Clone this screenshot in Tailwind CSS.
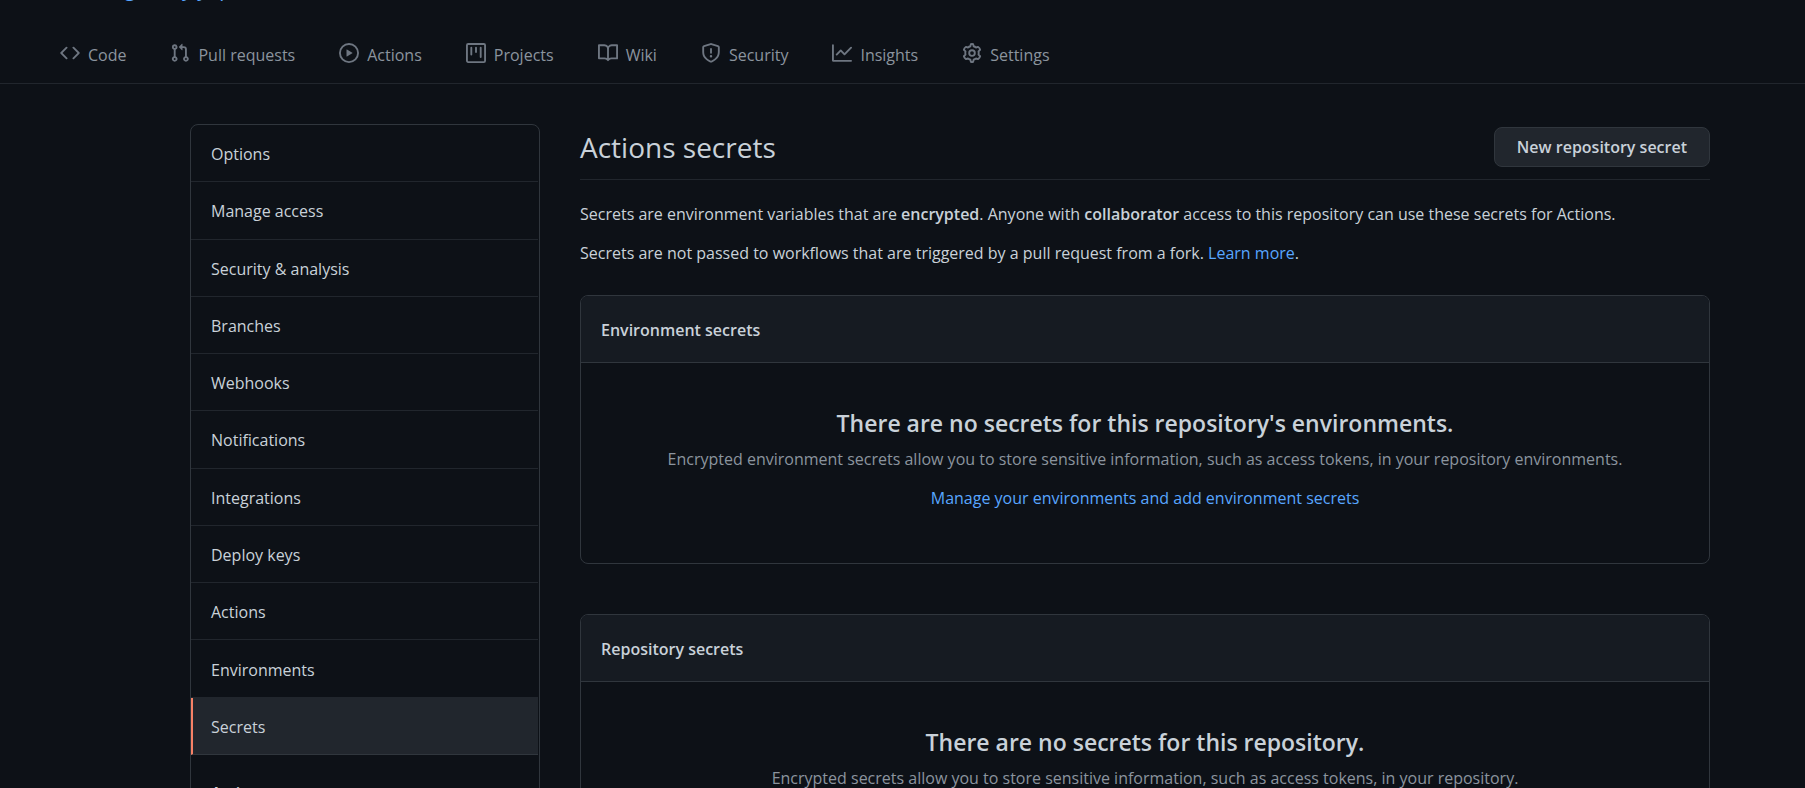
<!DOCTYPE html>
<html lang="en">
<head>
<meta charset="utf-8">
<meta name="viewport" content="width=device-width, initial-scale=1">
<title>Actions secrets</title>
<script src="https://cdn.jsdelivr.net/npm/@tailwindcss/browser@4"></script>
</head>
<body class="h-screen overflow-hidden bg-[#0d1117] font-['Open_Sans','Noto_Sans',sans-serif] text-base leading-[26px] text-[#c9d1d9]">
<header class="border-b border-[#21262d]">
  <div class="flex h-[5px] items-end overflow-hidden pb-0.5 pl-[101px]"><a href="#" class="text-xl leading-7 text-[#58a6ff]">angnabeyiyop</a></div>
  <nav class="flex h-[78px] items-center gap-11 pt-[23px] pb-px pl-[60px] text-[#8b949e]" aria-label="Repository">
    <a href="#" class="flex items-center gap-2"><svg class="mb-1 size-5 fill-[#6e7681]" viewBox="0 0 16 16" aria-hidden="true"><path fill-rule="evenodd" d="M4.72 3.22a.75.75 0 011.06 1.06L2.06 8l3.72 3.72a.75.75 0 11-1.06 1.06L.47 8.53a.75.75 0 010-1.06l4.25-4.25zm6.56 0a.75.75 0 10-1.06 1.06L13.94 8l-3.72 3.72a.75.75 0 101.06 1.06l4.25-4.25a.75.75 0 000-1.06l-4.25-4.25z"/></svg>Code</a>
    <a href="#" class="flex items-center gap-2"><svg class="mb-1 size-5 fill-[#6e7681]" viewBox="0 0 16 16" aria-hidden="true"><path fill-rule="evenodd" d="M7.177 3.073L9.573.677A.25.25 0 0110 .854v4.792a.25.25 0 01-.427.177L7.177 3.427a.25.25 0 010-.354zM3.75 2.5a.75.75 0 100 1.5.75.75 0 000-1.5zm-2.25.75a2.25 2.25 0 113 2.122v5.256a2.251 2.251 0 11-1.5 0V5.372A2.25 2.25 0 011.5 3.25zM11 2.5h-1V4h1a1 1 0 011 1v5.628a2.251 2.251 0 101.5 0V5A2.5 2.5 0 0011 2.5zm1 10.25a.75.75 0 111.5 0 .75.75 0 01-1.5 0zM3.75 12a.75.75 0 100 1.5.75.75 0 000-1.5z"/></svg>Pull requests</a>
    <a href="#" class="flex items-center gap-2"><svg class="mb-1 size-5 fill-[#6e7681]" viewBox="0 0 16 16" aria-hidden="true"><path fill-rule="evenodd" d="M1.5 8a6.5 6.5 0 1113 0 6.5 6.5 0 01-13 0zM8 0a8 8 0 100 16A8 8 0 008 0zM6.379 5.227A.25.25 0 006 5.442v5.117a.25.25 0 00.379.214l4.264-2.559a.25.25 0 000-.428L6.379 5.227z"/></svg>Actions</a>
    <a href="#" class="flex items-center gap-2"><svg class="mb-1 size-5 fill-[#6e7681]" viewBox="0 0 16 16" aria-hidden="true"><path fill-rule="evenodd" d="M1.75 0A1.75 1.75 0 000 1.75v12.5C0 15.216.784 16 1.75 16h12.5A1.75 1.75 0 0016 14.25V1.75A1.75 1.75 0 0014.25 0H1.75zM1.5 1.75a.25.25 0 01.25-.25h12.5a.25.25 0 01.25.25v12.5a.25.25 0 01-.25.25H1.75a.25.25 0 01-.25-.25V1.75zM11.75 3a.75.75 0 00-.75.75v7.5a.75.75 0 001.5 0v-7.5a.75.75 0 00-.75-.75zm-8.25.75a.75.75 0 011.5 0v5.5a.75.75 0 01-1.5 0v-5.5zM8 3a.75.75 0 00-.75.75v3.5a.75.75 0 001.5 0v-3.5A.75.75 0 008 3z"/></svg>Projects</a>
    <a href="#" class="flex items-center gap-2"><svg class="mb-1 size-5 fill-[#6e7681]" viewBox="0 0 16 16" aria-hidden="true"><path fill-rule="evenodd" d="M0 1.75A.75.75 0 01.75 1h4.253c1.227 0 2.317.59 3 1.501A3.744 3.744 0 0111.006 1h4.245a.75.75 0 01.75.75v10.5a.75.75 0 01-.75.75h-4.507a2.25 2.25 0 00-1.591.659l-.622.621a.75.75 0 01-1.06 0l-.622-.621A2.25 2.25 0 005.258 13H.75a.75.75 0 01-.75-.75V1.75zm8.755 3a2.25 2.25 0 012.25-2.25H14.5v9h-3.757c-.71 0-1.4.201-1.992.572l.004-7.322zm-1.504 7.324l.004-5.073-.002-2.253A2.25 2.25 0 005.003 2.5H1.5v9h3.757a3.75 3.75 0 011.994.574z"/></svg>Wiki</a>
    <a href="#" class="flex items-center gap-2"><svg class="mb-1 size-5 fill-[#6e7681]" viewBox="0 0 16 16" aria-hidden="true"><path fill-rule="evenodd" d="M7.467.133a1.75 1.75 0 011.066 0l5.25 1.68A1.75 1.75 0 0115 3.48V7c0 1.566-.32 3.182-1.303 4.682-.983 1.498-2.585 2.813-5.032 3.855a1.7 1.7 0 01-1.33 0c-2.447-1.042-4.049-2.357-5.032-3.855C1.32 10.182 1 8.566 1 7V3.48a1.75 1.75 0 011.217-1.667l5.25-1.68zm.61 1.429a.25.25 0 00-.153 0l-5.25 1.68a.25.25 0 00-.174.238V7c0 1.358.275 2.666 1.057 3.86.784 1.194 2.121 2.34 4.366 3.297a.2.2 0 00.154 0c2.245-.956 3.582-2.104 4.366-3.298C13.225 9.666 13.5 8.36 13.5 7V3.48a.25.25 0 00-.174-.237l-5.25-1.68zM9 10.5a1 1 0 11-2 0 1 1 0 012 0zm-.25-5.75a.75.75 0 10-1.5 0v3a.75.75 0 001.5 0v-3z"/></svg>Security</a>
    <a href="#" class="flex items-center gap-2"><svg class="mb-1 size-5 fill-[#6e7681]" viewBox="0 0 16 16" aria-hidden="true"><path fill-rule="evenodd" d="M1.5 1.75a.75.75 0 00-1.5 0v12.5c0 .414.336.75.75.75h14.5a.75.75 0 000-1.5H1.5V1.75zm14.28 2.53a.75.75 0 00-1.06-1.06L10 7.94 7.53 5.47a.75.75 0 00-1.06 0L3.22 8.72a.75.75 0 001.06 1.06L7 7.06l2.47 2.47a.75.75 0 001.06 0l5.25-5.25z"/></svg>Insights</a>
    <a href="#" class="flex items-center gap-2"><svg class="mb-1 size-5 fill-none stroke-[#6e7681] stroke-[1.5]" viewBox="0 0 16 16" aria-hidden="true"><circle cx="8" cy="8" r="2.25"/><path stroke-linejoin="round" d="M7.1.9Q8 .6 8.9.9L9.3 2.6Q10.4 3 11.2 3.6L12.9 3.1Q14.2 4.1 14.5 5.4L13.2 6.7Q13.5 8 13.2 9.3L14.5 10.6Q14.2 11.9 12.9 12.9L11.2 12.4Q10.4 13 9.3 13.4L8.9 15.1Q8 15.4 7.1 15.1L6.7 13.4Q5.6 13 4.8 12.4L3.1 12.9Q1.8 11.9 1.5 10.6L2.8 9.3Q2.5 8 2.8 6.7L1.5 5.4Q1.8 4.1 3.1 3.1L4.8 3.6Q5.6 3 6.7 2.6Z"/></svg>Settings</a>
  </nav>
</header>

<div class="flex items-start gap-10 pt-10 pr-[95px] pl-[190px]">
  <aside class="w-[350px] shrink-0 rounded-lg border border-[#30363d] pr-px">
    <nav class="grid min-h-[630px] auto-rows-fr" aria-label="Repository settings">
      <a href="#" class="flex items-center border-b border-[#21262d] px-5 pt-0.5">Options</a>
      <a href="#" class="flex items-center border-b border-[#21262d] px-5 pt-0.5">Manage access</a>
      <a href="#" class="flex items-center border-b border-[#21262d] px-5 pt-0.5">Security &amp; analysis</a>
      <a href="#" class="flex items-center border-b border-[#21262d] px-5 pt-0.5">Branches</a>
      <a href="#" class="flex items-center border-b border-[#21262d] px-5 pt-0.5">Webhooks</a>
      <a href="#" class="flex items-center border-b border-[#21262d] px-5 pt-0.5">Notifications</a>
      <a href="#" class="flex items-center border-b border-[#21262d] px-5 pt-0.5">Integrations</a>
      <a href="#" class="flex items-center border-b border-[#21262d] px-5 pt-0.5">Deploy keys</a>
      <a href="#" class="flex items-center border-b border-[#21262d] px-5 pt-0.5">Actions</a>
      <a href="#" class="flex items-center border-b border-[#21262d] px-5 pt-0.5">Environments</a>
      <a href="#" aria-current="page" class="flex items-center border-b border-l-2 border-b-[#30363d] border-l-[#f78166] bg-[#21262d] pt-0.5 pr-5 pl-[18px]">Secrets</a>
    </nav>
    <a href="#" class="block px-5 py-[25px] font-semibold">Actions</a>
  </aside>

  <main class="min-w-0 flex-1">
    <div class="flex items-center justify-between border-b border-[#21262d] pt-[3px] pb-3">
      <h1 class="text-[28px] leading-10">Actions secrets</h1>
      <button type="button" class="h-10 rounded-lg border border-[#30363d] bg-[#21262d] px-[22px] font-semibold">New repository secret</button>
    </div>
    <p class="pt-[21px]">Secrets are environment variables that are <strong class="font-semibold">encrypted</strong>. Anyone with <strong class="font-semibold">collaborator</strong> access to this repository can use these secrets for Actions.</p>
    <p class="pt-[13px]">Secrets are not passed to workflows that are triggered by a pull request from a fork. <a href="#" class="text-[#58a6ff]">Learn more</a>.</p>

    <section class="mt-[29px] overflow-hidden rounded-lg border border-[#30363d]">
      <h2 class="border-b border-[#30363d] bg-[#161b22] px-5 pt-[21px] pb-[19px] font-semibold">Environment secrets</h2>
      <div class="px-10 pt-10 pb-[52px] text-center">
        <h3 class="pb-[3px] text-[23px] leading-10 font-semibold">There are no secrets for this repository's environments.</h3>
        <p class="text-[#8b949e]">Encrypted environment secrets allow you to store sensitive information, such as access tokens, in your repository environments.</p>
        <p class="pt-[13px]"><a href="#" class="text-[#58a6ff]">Manage your environments and add environment secrets</a></p>
      </div>
    </section>

    <section class="mt-[50px] overflow-hidden rounded-lg border border-[#30363d]">
      <h2 class="border-b border-[#30363d] bg-[#161b22] px-5 pt-[21px] pb-[19px] font-semibold">Repository secrets</h2>
      <div class="px-10 pt-10 pb-[52px] text-center">
        <h3 class="pb-[3px] text-[23px] leading-10 font-semibold">There are no secrets for this repository.</h3>
        <p class="text-[#8b949e]">Encrypted secrets allow you to store sensitive information, such as access tokens, in your repository.</p>
      </div>
    </section>
  </main>
</div>
</body>
</html>
